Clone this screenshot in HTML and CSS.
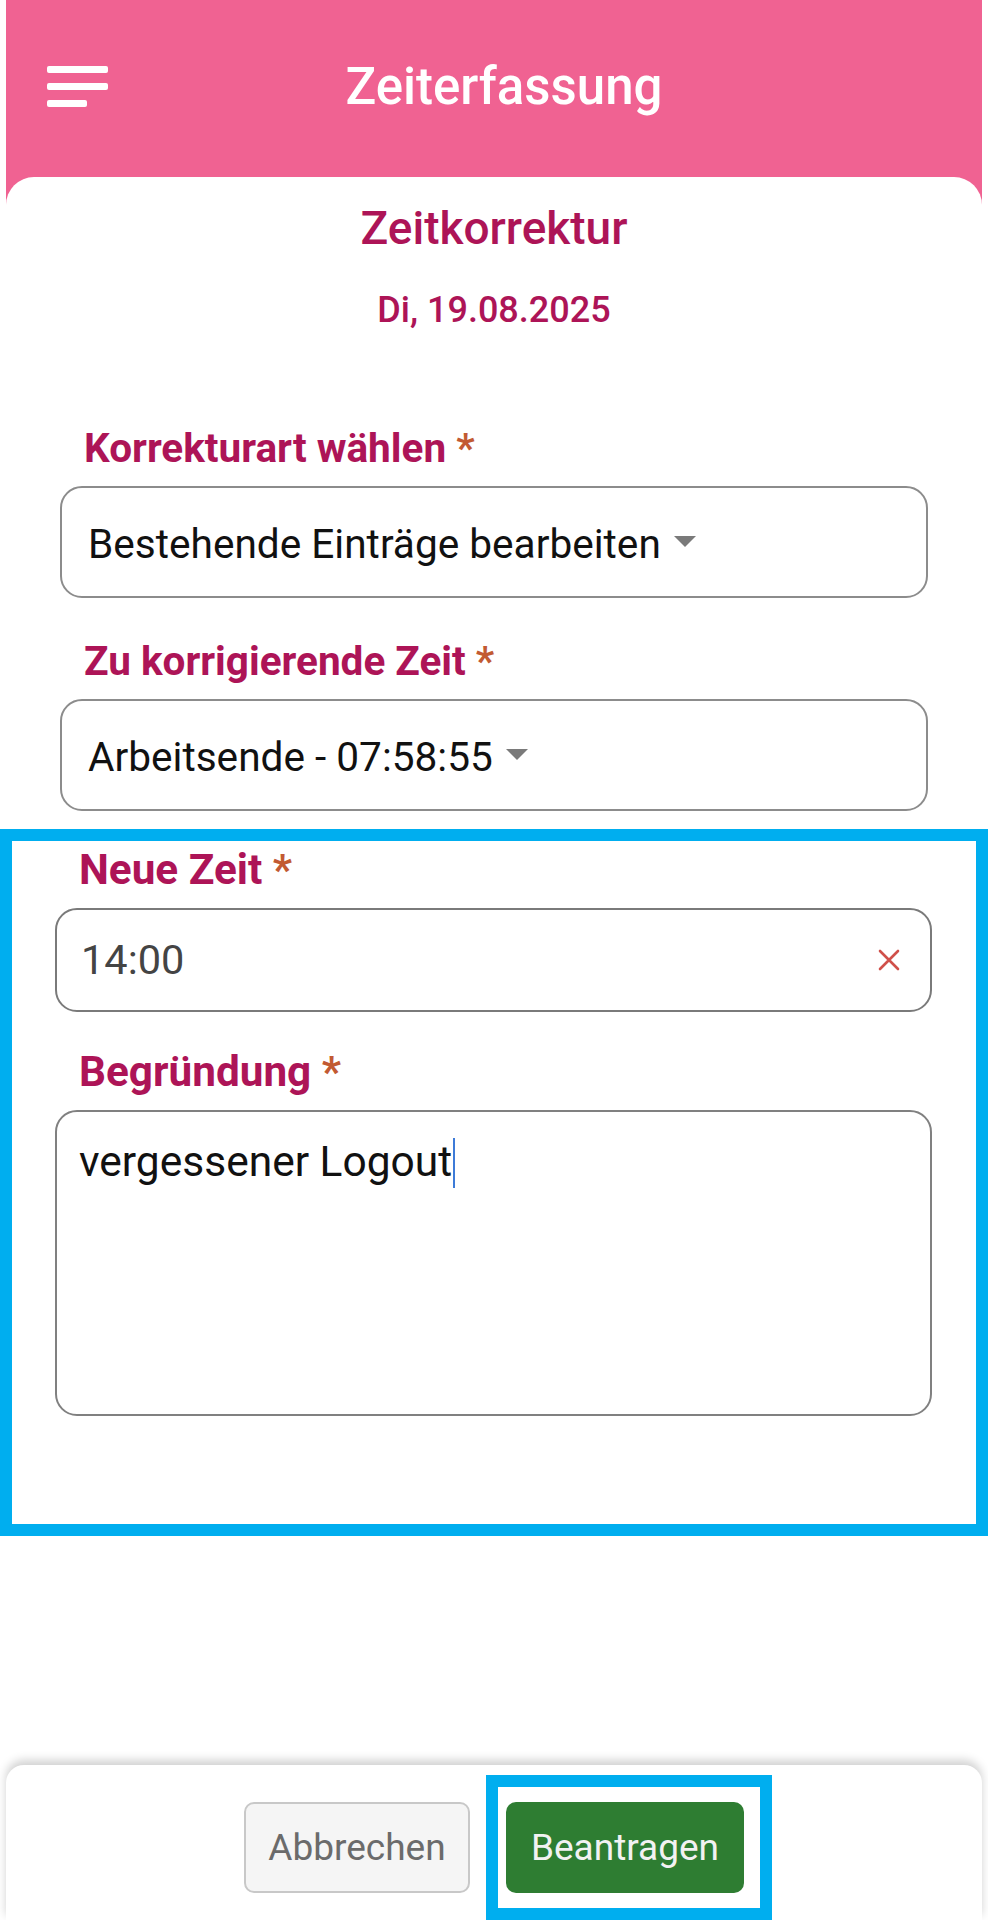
FILE: index.html
```
<!DOCTYPE html>
<html lang="de">
<head>
    <meta charset="utf-8">
    <title>Zeiterfassung - Zeitkorrektur</title>
    <link rel="stylesheet" href="styles.css">
</head>
<body>
    <div class="app">
        <header class="topbar">
            <button class="menu-btn" aria-label="Menü">
                <span></span>
                <span></span>
                <span class="short"></span>
            </button>
            <h1>Zeiterfassung</h1>
        </header>

        <main class="sheet">
            <h2 class="sheet-title">Zeitkorrektur</h2>
            <p class="sheet-date">Di, 19.08.2025</p>

            <div class="field field-first">
                <label>Korrekturart wählen <span class="req">*</span></label>
                <div class="select">
                    <span>Bestehende Einträge bearbeiten</span>
                    <svg class="caret-down" width="24" height="13" viewBox="0 0 24 13"><path d="M1 1h22L12 12z" fill="#7a7a7a"/></svg>
                </div>
            </div>

            <div class="field">
                <label>Zu korrigierende Zeit <span class="req">*</span></label>
                <div class="select">
                    <span>Arbeitsende - 07:58:55</span>
                    <svg class="caret-down" width="24" height="13" viewBox="0 0 24 13"><path d="M1 1h22L12 12z" fill="#7a7a7a"/></svg>
                </div>
            </div>

            <section class="highlight">
                <div class="field">
                    <label>Neue Zeit <span class="req">*</span></label>
                    <div class="input">
                        <span class="value">14:00</span>
                        <svg class="clear" width="22" height="22" viewBox="0 0 22 22"><path d="M2 2l18 18M20 2L2 20" stroke="#d0504a" stroke-width="2.6" stroke-linecap="round"/></svg>
                    </div>
                </div>

                <div class="field field-reason">
                    <label>Begründung <span class="req">*</span></label>
                    <div class="textarea">vergessener Logout<span class="cursor"></span></div>
                </div>
            </section>
        </main>

        <footer class="actions">
            <button class="btn btn-cancel">Abbrechen</button>
            <div class="mark">
                <button class="btn btn-submit">Beantragen</button>
            </div>
        </footer>
    </div>
</body>
</html>
```

FILE: styles.css
```
* {
    box-sizing: border-box;
}
body {
    margin: 0;
    background: white;
    font-family: Roboto, "Noto Sans", Arial, sans-serif;
    color: #111;
}
.app {
    margin: 0 6px;
    min-height: 1920px;
    display: flex;
    flex-direction: column;
}
.topbar {
    height: 205px;
    padding: 0 82px 32px 41px;
    background: #f06292;
    display: flex;
    align-items: center;
}
.menu-btn {
    width: 61px;
    padding: 0;
    border: none;
    background: none;
    display: flex;
    flex-direction: column;
    gap: 10px;
}
.menu-btn span {
    display: block;
    width: 61px;
    height: 7px;
    border-radius: 2px;
    background: white;
}
.menu-btn .short {
    width: 40px;
}
.topbar h1 {
    flex: 1;
    margin: 0;
    text-align: center;
    color: white;
    font-size: 51px;
    line-height: 58px;
    font-weight: 500;
}
.sheet {
    flex: 1;
    margin-top: -28px;
    padding: 25px 54px 0;
    background: white;
    border-radius: 28px 28px 0 0;
    position: relative;
}
.sheet-title {
    margin: 0;
    text-align: center;
    color: #ad1457;
    font-size: 46px;
    line-height: 52px;
    font-weight: 500;
}
.sheet-date {
    margin: 35px 0 0;
    text-align: center;
    color: #ad1457;
    font-size: 36px;
    line-height: 42px;
    font-weight: 500;
}
.field {
    display: flex;
    flex-direction: column;
    gap: 14px;
    margin-top: 39px;
}
.field-first {
    margin-top: 93px;
}
.field label {
    margin-left: 24px;
    color: #ad1457;
    font-size: 40.5px;
    line-height: 48px;
    font-weight: 700;
}
.req {
    color: #c25a32;
}
.select {
    height: 112px;
    padding: 4px 26px 0;
    border: 2px solid #8c8c8c;
    border-radius: 22px;
    display: flex;
    align-items: center;
    gap: 12px;
    font-size: 40.6px;
    line-height: 48px;
}
.caret-down {
    margin-top: -6px;
}
.highlight {
    margin: 18px -60px 0;
    padding: 5px 44px 108px 43px;
    border: 12px solid #00aeef;
}
.highlight .field:first-child {
    margin-top: 0;
}
.highlight .field label {
    font-size: 42.3px;
}
.field-reason {
    margin-top: 36px;
}
.input {
    height: 104px;
    padding: 0 30px 0 24px;
    border: 2px solid #7a7a7a;
    border-radius: 22px;
    display: flex;
    align-items: center;
    justify-content: space-between;
    font-size: 41.5px;
    line-height: 48px;
    color: #444;
}
.textarea {
    height: 306px;
    padding: 26px 22px;
    border: 2px solid #808080;
    border-radius: 22px;
    font-size: 42.5px;
    line-height: 48px;
    color: #111;
}
.cursor {
    display: inline-block;
    width: 2px;
    height: 50px;
    margin-left: 1px;
    vertical-align: -12px;
    background: #3d7bd8;
}
.actions {
    height: 155px;
    padding-top: 37px;
    background: white;
    border-radius: 18px 18px 0 0;
    box-shadow: 0 -5px 10px rgba(0, 0, 0, 0.18);
    display: flex;
    justify-content: center;
    align-items: flex-start;
    gap: 36px;
    position: relative;
}
.btn {
    height: 91px;
    padding: 0 20px;
    border-radius: 10px;
    font-family: Roboto, "Noto Sans", Arial, sans-serif;
    font-size: 37px;
}
.btn-cancel {
    width: 226px;
    background: #f5f5f5;
    border: 2px solid #c8c8c8;
    color: #6b6b6b;
}
.btn-submit {
    width: 238px;
    background: #2e7d32;
    border: none;
    color: #f2f2f2;
}
.mark {
    position: relative;
}
.mark::after {
    content: "";
    position: absolute;
    left: -20px;
    right: -28px;
    top: -27px;
    bottom: -27px;
    border: 12px solid #00aeef;
}
```
